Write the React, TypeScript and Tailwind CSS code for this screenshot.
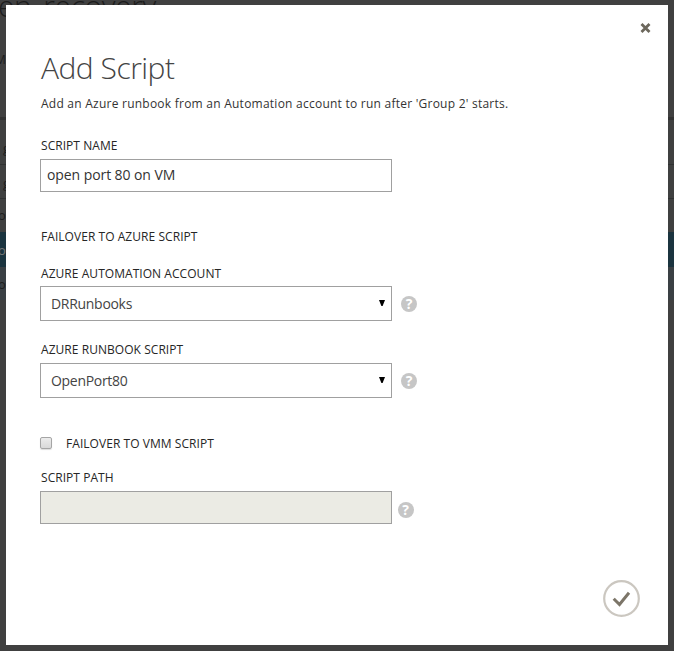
import React from "react";

function Help({ className = "" }: { className?: string }) {
  return (
    <span
      className={`flex h-4 w-4 items-center justify-center rounded-full bg-[#c6c6c6] text-[14px] leading-4 font-bold text-white ${className}`}
    >
      ?
    </span>
  );
}

function Label({ children, className = "" }: { children: React.ReactNode; className?: string }) {
  return (
    <div className={`h-4 text-[12px] leading-4 tracking-[0.05px] whitespace-nowrap text-[#262626] ${className}`}>
      <span className="ml-px">{children}</span>
    </div>
  );
}

function Select({ value, className = "" }: { value: string; className?: string }) {
  return (
    <div className={`flex items-center ${className}`}>
      <div className="flex h-[35px] w-[352px] items-center justify-between border border-[#a0a0a0] pr-[6px] pl-[10px]">
        <span className="text-[14px] leading-5 tracking-[-0.3px] text-[#444]">{value}</span>
        <svg width="6" height="6" viewBox="0 0 6 6" className="mb-[2px]">
          <path d="M0 0H6L3.6 6H2.4Z" fill="#000" />
        </svg>
      </div>
      <Help className="mt-px ml-[9px]" />
    </div>
  );
}

function Backdrop() {
  return (
    <div className="flex h-[651px] w-full flex-col overflow-hidden bg-[#404040] text-[13px] leading-4 text-[#1c1c1c]">
      <div className="h-[50px] text-[30px] leading-[12px] font-light tracking-[-0.4px] whitespace-nowrap">
        <span className="-ml-[2px]">en_recovery</span>
      </div>
      <div className="h-[67px] pt-[2px] text-[12px]"><span className="-ml-[5px]">M</span></div>
      <div className="h-[3px] bg-[#323232]" />
      <div className="h-[44px] bg-[#3f4040] pt-[20px] pl-[3px]">g</div>
      <div className="h-px bg-[#303232]" />
      <div className="h-[33px] bg-[#3f4040] pt-[10px] pl-[3px]">g</div>
      <div className="h-px bg-[#303232]" />
      <div className="h-[33px] bg-[#3f4040] pt-[8px]"><span className="-ml-[2px]">o</span></div>
      <div className="h-[35px] bg-[#1b343f] pt-[10px] text-[#777]"><span className="-ml-[2px]">o</span></div>
      <div className="h-[33px] bg-[#3a4044] pt-[9px]"><span className="-ml-[2px]">o</span></div>
    </div>
  );
}

export default function App() {
  return (
    <div className="relative h-[651px] w-[674px] overflow-hidden font-['Open_Sans','Noto_Sans',sans-serif]">
      <Backdrop />
      <div className="absolute top-[5px] left-[6px] flex h-[640px] w-[662px] flex-col bg-white pl-[34px]">
        <div className="flex h-[43px] justify-end pt-[18px] pr-[17px]">
          <svg width="11" height="10" viewBox="0 0 11 10">
            <path d="M1.5 1L9.5 9M9.5 1L1.5 9" stroke="#6c675c" strokeWidth="2.8" />
          </svg>
        </div>
        <h1 className="ml-px h-10 text-[30px] leading-10 font-light tracking-[-0.5px] whitespace-nowrap text-[#444]">Add Script</h1>
        <p className="mt-2 ml-px h-4 text-[12px] leading-4 tracking-[0.24px] whitespace-nowrap text-[#333]">
          Add an Azure runbook from an Automation account to run after 'Group 2' starts.
        </p>
        <Label className="mt-[26px]">SCRIPT NAME</Label>
        <div className="mt-[5px] flex h-[33px] w-[352px] items-center border border-[#a0a0a0] pb-px pl-[6px] text-[14px] leading-5 tracking-[-0.08px] text-[#333]">
          open port 80 on VM
        </div>
        <Label className="mt-[37px]">FAILOVER TO AZURE SCRIPT</Label>
        <Label className="mt-[21px]">AZURE AUTOMATION ACCOUNT</Label>
        <Select className="mt-[4px]" value="DRRunbooks" />
        <Label className="mt-[21px]">AZURE RUNBOOK SCRIPT</Label>
        <Select className="mt-[5px]" value="OpenPort80" />
        <div className="mt-[37px] flex h-4 items-center">
          <span className="h-3 w-3 rounded-[2px] border border-[#a5a5a5] bg-linear-to-b from-[#ececec] to-[#d9d9d9] shadow-[0_1px_1px_#ddd]" />
          <Label className="mt-[2px] ml-[13px]">FAILOVER TO VMM SCRIPT</Label>
        </div>
        <Label className="mt-[19px]">SCRIPT PATH</Label>
        <div className="mt-[5px] flex items-center">
          <div className="h-[33px] w-[352px] border border-[#a0a0a0] bg-[#ebebe4]" />
          <Help className="mt-[4px] ml-[5.5px]" />
        </div>
        <div className="mt-[56px] flex justify-end pr-[28px]">
          <svg width="37" height="37" viewBox="0 0 37 37" fill="none">
            <circle cx="18.5" cy="18.5" r="17.3" stroke="#cbc7c0" strokeWidth="2.2" />
            <path d="M10.7 18.7L16.5 24.5L26 12.8" stroke="#7c7568" strokeWidth="3" />
          </svg>
        </div>
      </div>
    </div>
  );
}
